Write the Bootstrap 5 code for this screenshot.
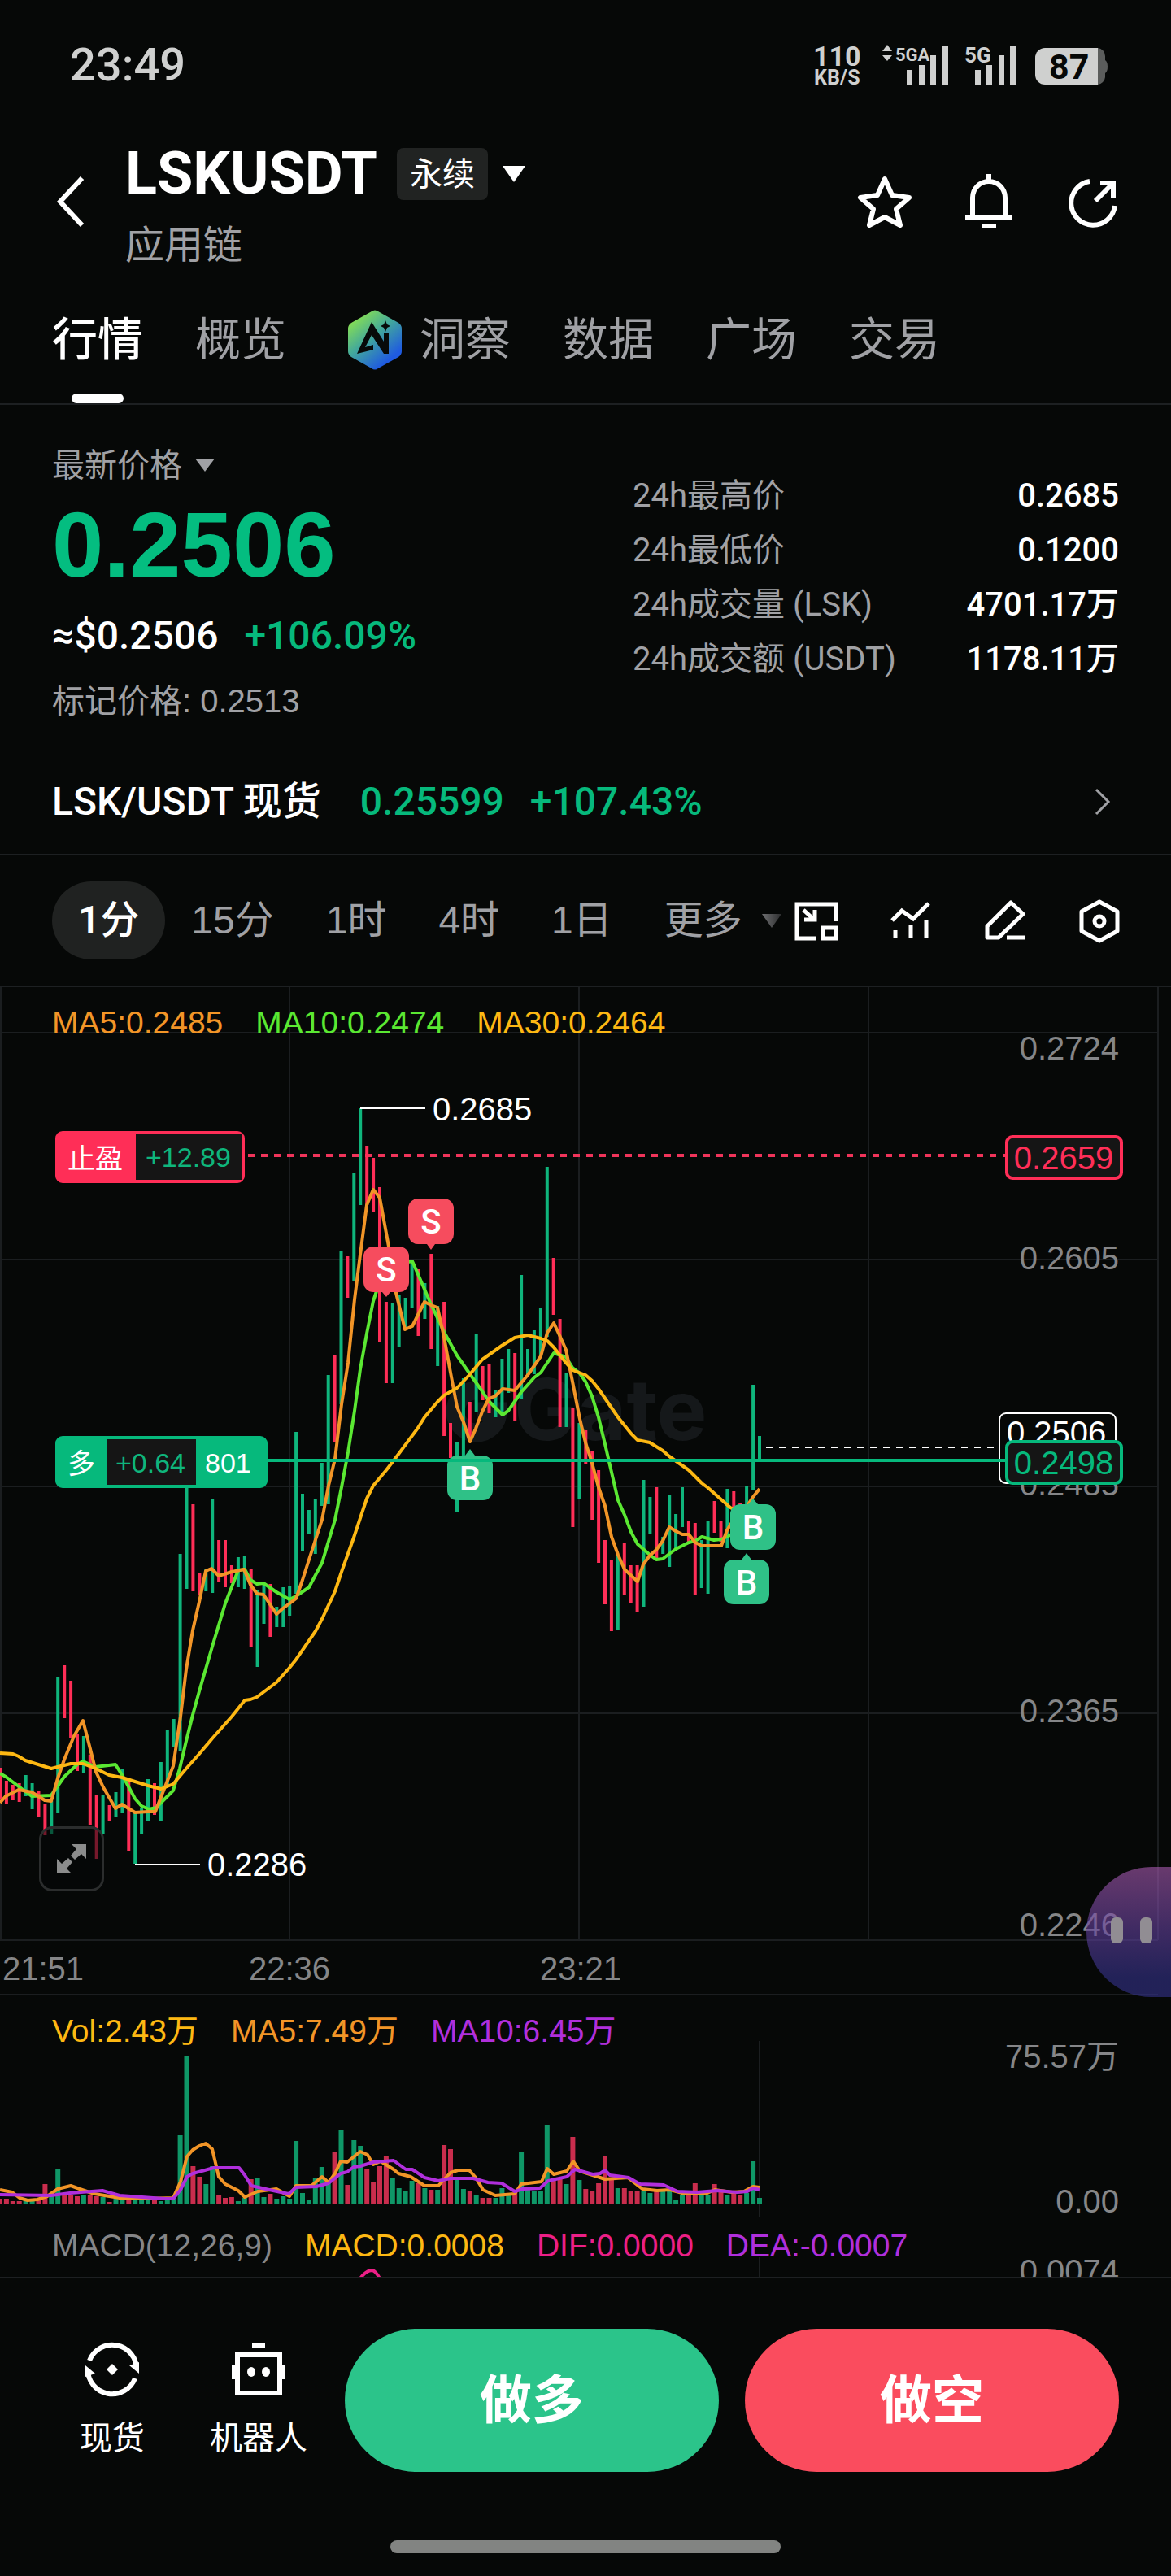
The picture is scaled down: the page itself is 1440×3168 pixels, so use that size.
<!DOCTYPE html>
<html lang="zh-CN" data-bs-theme="dark">
<head>
<meta charset="utf-8">
<meta name="viewport" content="width=device-width, initial-scale=1">
<title>LSKUSDT 永续</title>
<link href="https://cdn.jsdelivr.net/npm/bootstrap@5.3.0/dist/css/bootstrap.min.css" rel="stylesheet">
<style>
:root{--ink:#060807;--line:#1d2022;--muted:#a0a1a5;--axis:#858688;--up:#06b97c;--down:#ff2e57;--ma5:#f29527;--ma10:#5ae832;--ma30:#fdb813;--violet:#b02fdc;--pink:#ec1f86;
--plain:"Liberation Sans","Noto Sans CJK SC",sans-serif;--medium:Roboto,"Noto Sans CJK SC",sans-serif}
body{background:var(--ink);color:#fff;font-family:var(--plain);font-size:40px;line-height:48px;overflow-x:hidden}
svg{display:block;overflow:visible}
button,a{color:inherit;text-decoration:none}
.bare{background:none;border:0;padding:0}
.px-edge{padding-left:64px;padding-right:64px}
.rule-b{border-bottom:2px solid var(--line)}
.rule-t{border-top:2px solid var(--line)}
.txt-muted{color:var(--muted)}
.txt-up{color:var(--up)}
.md{font-family:var(--medium);font-weight:500}
.stroke{fill:none;stroke:currentColor}

.statusbar{height:160px;padding-left:86px;padding-right:78px;color:#cfd0cf}
.clock{font-family:Roboto,sans-serif;font-weight:500;font-size:56px}
.statusbar svg{font-family:Roboto,sans-serif;font-weight:700;fill:currentColor}

.topbar{padding-top:14px}
.back{width:90px;margin-bottom:8px}
.head-icons{gap:64px;margin-bottom:8px}
.pair{font-family:Roboto,sans-serif;font-weight:700;font-size:72px;line-height:80px;margin:0}
.kind{background:#212322;border-radius:8px;line-height:64px;padding:0 16px;margin-left:24px}
.sector{font-size:48px;line-height:56px;margin-top:20px}

.tabs{padding-top:48px;gap:64px}
.tabs a{display:flex;align-items:center;position:relative;font-size:56px;line-height:80px;padding:0 0 38px;color:var(--muted)}
.tabs a.active{color:#fff;font-weight:500}
.tabs a.active::after{content:"";position:absolute;left:50%;bottom:0;width:64px;height:12px;margin-left:-32px;border-radius:6px;background:#fff}
.tabs svg{margin:0 22px 0 12px}

.quote{padding-top:50px}
.last{font-size:114px;line-height:112px;font-weight:700;margin-top:18px;color:#04bd80}
.fiat{font-size:48px;line-height:64px;margin:24px 0;gap:32px}
.stats{width:598px;margin:28px 0 0;line-height:67px}
.stats dt{font-family:var(--medium);font-weight:400}
.stats dd{margin:0}
.spot{font-size:48px;line-height:64px;padding-top:68px;padding-bottom:32px}
.spot b{font-weight:500;margin-right:48px}

.ranges{height:162px}
.ranges .bare{font-size:48px;line-height:96px;padding:0 32px;border-radius:48px;color:var(--muted)}
.ranges .bare.active{background:#202221;color:#fff;font-family:var(--medium);font-weight:500}
.tools{gap:68px}

.panel{position:relative}
.panel svg.plot{width:100%;height:auto;overflow:hidden}
.legend-row{position:absolute;left:64px;top:20px;display:flex;gap:40px;font-size:39px}
.legend-row.low{top:12px}
.plot text{font-family:var(--plain);font-size:40px;dominant-baseline:central}
.plot .sm{font-size:34px}
.plot .mk{font-family:var(--medium);font-weight:500;font-size:42px;fill:#fff;text-anchor:middle}
.plot .ax{fill:var(--axis);text-anchor:end}
.plot .grid{stroke:#1b1e20;stroke-width:2}
.expand{position:absolute;left:48px;bottom:128px;width:80px;height:80px;border:3px solid #2b2d2d;border-radius:16px;background:rgba(6,8,7,.55);color:#8b8c8c;display:flex;align-items:center;justify-content:center;padding:0}
.helper{position:absolute;right:0;bottom:-2px;width:104px;height:160px;border:0;border-radius:80px 0 0 80px;background:linear-gradient(rgba(170,91,178,.6),rgba(99,65,159,.6) 50%,rgba(53,51,142,.6) 85%);padding:0 0 4px 30px;z-index:2}

.shortcut{line-height:56px}
.shortcut svg{margin:0 auto 20px}
.actions{padding-top:62px}
.trade{height:176px;border-radius:88px;border:0;font-size:64px;font-weight:700;color:#fff}
.trade.long{background:#2bc48a;margin-right:32px}
.trade.short{background:#fa4c5e}
.homebar{width:33.333%;height:16px;border-radius:8px;background:#828482;margin:84px auto 28px}
</style>
</head>
<body>
<header>
  <div class="statusbar d-flex align-items-center justify-content-between">
    <span class="clock">23:49</span>
    <svg width="362" height="52" viewBox="998 54 362 52" role="img" aria-label="网络与电量">
      <text x="998" y="81" font-size="34">110</text>
      <text x="999" y="104" font-size="25">KB/S</text>
      <path d="M1083 63l6-8 6 8zM1083 68h12l-6 7z"/>
      <text x="1099" y="75" font-size="22">5GA</text>
      <path d="M1113 86h7v18h-7zM1128 80h7v24h-7zM1142 68h7v36h-7zM1157 56h7v48h-7z"/>
      <text x="1184" y="77" font-size="26">5G</text>
      <path d="M1197 86h7v18h-7zM1211 80h7v24h-7zM1226 68h7v36h-7zM1240 56h7v48h-7z"/>
      <path d="M1340 59h8a10 10 0 0 1 9 10v5q3 2 3 8t-3 8v5a10 10 0 0 1-9 9h-8z" fill="#5b5d5c"/>
      <path d="M1283 59h65v45h-65a12 12 0 0 1-12-12V71a12 12 0 0 1 12-12z"/>
      <text x="1288" y="97" font-size="43" fill="#060807">87</text>
    </svg>
  </div>
  <div class="topbar px-edge d-flex align-items-center">
    <button class="bare back" aria-label="返回"><svg width="44" height="64" viewBox="0 0 44 64"><path class="stroke" stroke-width="6" d="M37 3L10 32l27 29"/></svg></button>
    <div class="flex-grow-1">
      <div class="d-flex align-items-center">
        <h1 class="pair">LSKUSDT</h1>
        <span class="kind">永续</span>
        <svg class="ms-3" width="32" height="22" viewBox="0 0 32 22"><path fill="#fff" d="M2 1h28L16 21z"/></svg>
      </div>
      <div class="sector txt-muted">应用链</div>
    </div>
    <div class="head-icons d-flex">
      <button class="bare" aria-label="收藏"><svg width="64" height="64"><path class="stroke" stroke-width="6" stroke-linejoin="round" d="M32 4L41 24 62 27 46 41 51 61 32 51 13 61 18 41 2 27 23 24Z"/></svg></button>
      <button class="bare" aria-label="提醒"><svg width="64" height="64"><path class="stroke" stroke-width="6" d="M32-2V6M12 51V27a20 20 0 0 1 40 0V51M3 52H61M23 62H41"/></svg></button>
      <button class="bare" aria-label="分享"><svg width="64" height="64"><path class="stroke" stroke-width="6" d="M28 7A27 27 0 1 0 59 37M41 9H57V27M57 9L35 31"/></svg></button>
    </div>
  </div>
  <nav class="tabs px-edge rule-b d-flex">
    <a class="active" href="#">行情</a>
    <a href="#">概览</a>
    <a href="#"><svg width="66" height="74" viewBox="0 0 66 74"><defs><linearGradient id="ai" x1="0" y1="0" x2=".75" y2="1"><stop offset=".1" stop-color="#8fe64a"/><stop offset=".5" stop-color="#42a89c"/><stop offset=".9" stop-color="#1f5be0"/></linearGradient></defs><path fill="url(#ai)" d="M29 2q4-3 8 0L62 16q4 3 4 7V51q0 4-4 7L37 72q-4 3-8 0L4 58q-4-3-4-7V23q0-4 4-7z"/><path fill="#070a09" d="M29 15L44 39V28h6V54H44L29 31 21 46l10-3v6L11 54zM46 13l2 5 4 2-4 2-2 5-2-5-4-2 4-2z"/></svg>洞察</a>
    <a href="#">数据</a>
    <a href="#">广场</a>
    <a href="#">交易</a>
  </nav>
</header>

<main>
  <section class="quote px-edge d-flex justify-content-between align-items-start">
    <div>
      <div class="d-flex align-items-center txt-muted">最新价格<svg class="ms-3" width="24" height="18" viewBox="0 0 24 18"><path fill="currentColor" d="M0 1h24L12 17z"/></svg></div>
      <div class="last">0.2506</div>
      <div class="fiat md d-flex"><span>≈$0.2506</span><span class="txt-up">+106.09%</span></div>
      <div class="txt-muted">标记价格: 0.2513</div>
    </div>
    <dl class="stats">
      <div class="d-flex justify-content-between"><dt class="txt-muted">24h最高价</dt><dd class="md">0.2685</dd></div>
      <div class="d-flex justify-content-between"><dt class="txt-muted">24h最低价</dt><dd class="md">0.1200</dd></div>
      <div class="d-flex justify-content-between"><dt class="txt-muted">24h成交量 (LSK)</dt><dd class="md">4701.17万</dd></div>
      <div class="d-flex justify-content-between"><dt class="txt-muted">24h成交额 (USDT)</dt><dd class="md">1178.11万</dd></div>
    </dl>
  </section>
  <a href="#" class="spot md px-edge rule-b d-flex align-items-center">
    <b>LSK/USDT 现货</b><span class="txt-up">0.25599</span><span class="txt-up ms-4 ps-2">+107.43%</span>
    <svg class="ms-auto me-2 txt-muted" width="24" height="34" viewBox="0 0 24 34"><path class="stroke" stroke-width="3" d="M4 2l15 15L4 32"/></svg>
  </a>
  <div class="ranges px-edge rule-b d-flex align-items-center justify-content-between">
    <div class="d-flex">
      <button class="bare active">1分</button><button class="bare">15分</button><button class="bare">1时</button><button class="bare">4时</button><button class="bare">1日</button>
      <button class="bare d-flex align-items-center pe-0">更多<svg class="ms-4" width="24" height="17" viewBox="0 0 24 17"><defs><linearGradient id="fade" x1="0" x2="1"><stop stop-color="#6e6f71"/><stop offset="1" stop-color="#2c2d2e"/></linearGradient></defs><path fill="url(#fade)" d="M0 0h24L12 17z"/></svg></button>
    </div>
    <div class="tools d-flex">
      <button class="bare p-0" aria-label="画中画"><svg width="48" height="48" color="#fff"><path class="stroke" stroke-width="5" d="M48 25V4H0V46H24M32 33H48V46H32ZM8 11L20 22M22 11V23H9"/></svg></button>
      <button class="bare p-0" aria-label="指标"><svg width="48" height="48" color="#fff"><path class="stroke" stroke-width="5" d="M1 24L13 12 27 22 46 3M5 36V46M24 30V46M43 24V46"/></svg></button>
      <button class="bare p-0" aria-label="画线"><svg width="48" height="48" color="#fff"><path class="stroke" stroke-width="5" stroke-linejoin="round" d="M2 45V31L31 2 46 16 16 45ZM26 45H48"/></svg></button>
      <button class="bare p-0" aria-label="设置"><svg width="48" height="48" color="#fff"><path class="stroke" stroke-width="5" stroke-linejoin="round" d="M24 1L46 13V37L24 49 2 37V13Z"/><circle class="stroke" stroke-width="5" cx="24" cy="25" r="6"/></svg></button>
    </div>
  </div>

  <section class="panel">
    <svg class="plot" viewBox="0 1214 1440 1240" role="img" aria-label="K线图">
      <path class="grid" d="M0 1270H1424M0 1549H1424M0 1828H1424M0 2107H1424M0 2386H1424M0 2453H1424M1 1214V2386M356 1214V2386M712 1214V2386M1068 1214V2386M1424 1214V2386"/>
      <g fill="#15181a"><text x="632" y="1733" style="font:700 104px Inter,sans-serif">Gate</text><path fill="none" stroke="#15181a" stroke-width="23" d="M586 1710a26 26 0 1 0 26 26H586"/></g>
      <g class="ax"><text class="ax" x="1376" y="1289">0.2724</text><text class="ax" x="1376" y="1547">0.2605</text><text class="ax" x="1376" y="1825">0.2485</text><text class="ax" x="1376" y="2104">0.2365</text><text class="ax" x="1376" y="2367">0.2246</text></g>
      <g fill="#858688"><text x="3" y="2421">21:51</text><text x="356" y="2421" text-anchor="middle">22:36</text><text x="714" y="2421" text-anchor="middle">23:21</text></g>
      <path stroke="#f0345a" stroke-width="4" stroke-dasharray="8 8" d="M305 1421H1236"/>
      <g id="candles" stroke-width="4"></g>
      <g fill="none" stroke-width="4" stroke-linejoin="round">
        <polyline stroke="var(--ma10)" points="0,2181 7,2185 23,2197 39,2209 63,2208 79,2185 95,2170 102,2166 117,2173 142,2170 152,2186 166,2212 174,2221 183,2225 192,2223 205,2210 213,2202 221,2175 229,2141 237,2109 245,2080 261,2025 277,1972 293,1931 301,1930 308,1943 316,1948 324,1947 340,1958 356,1967 364,1963 380,1952 396,1922 412,1869 420,1829 428,1786 436,1735 443,1684 451,1640 459,1600 463,1588 480,1556 507,1551 514,1567 530,1604 546,1638 562,1667 578,1690 593,1711 601,1723 618,1740 625,1735 641,1712 657,1694 665,1688 681,1664 696,1669 704,1682 713,1689 720,1699 728,1717 736,1743 744,1776 760,1845 768,1863 776,1884 784,1899 799,1912 807,1918 815,1917 831,1905 847,1897 855,1895 863,1890 878,1894 887,1893 898,1888 910,1880"/>
        <polyline stroke="var(--ma5)" points="0,2217 7,2209 23,2201 39,2204 55,2214 63,2215 71,2187 79,2164 91,2135 102,2116 111,2151 118,2179 127,2198 142,2224 150,2219 166,2229 182,2228 191,2228 198,2210 213,2172 222,2111 229,2053 237,2005 245,1970 253,1932 260,1929 269,1938 285,1933 300,1930 308,1949 316,1960 324,1961 340,1985 348,1978 364,1966 372,1943 380,1918 396,1869 404,1827 412,1794 420,1727 428,1676 436,1598 443,1543 451,1482 459,1463 467,1473 478,1533 487,1590 498,1635 507,1631 522,1601 530,1605 538,1608 546,1644 554,1688 562,1730 570,1749 578,1773 585,1757 593,1736 601,1720 609,1717 618,1708 633,1710 649,1691 665,1668 673,1639 681,1627 688,1642 696,1660 704,1699 713,1745 720,1774 728,1799 736,1829 744,1852 752,1890 760,1912 768,1930 784,1945 791,1924 799,1913 807,1906 815,1895 823,1878 831,1883 839,1887 847,1887 855,1897 863,1901 887,1901 894,1882 902,1869 918,1853 926,1841 934,1831"/>
        <polyline stroke="var(--ma30)" points="0,2156 16,2157 23,2160 31,2165 63,2175 79,2171 87,2169 102,2169 118,2175 134,2183 150,2186 182,2196 198,2200 213,2194 229,2175 245,2157 261,2138 285,2111 301,2091 308,2090 316,2087 340,2069 356,2051 364,2041 388,2006 396,1991 412,1957 420,1933 435,1891 451,1843 459,1827 475,1808 491,1787 514,1756 522,1743 538,1724 546,1716 562,1707 578,1690 593,1672 617,1655 633,1645 649,1642 665,1646 673,1649 681,1657 696,1676 704,1685 720,1691 728,1698 736,1708 760,1743 776,1763 784,1771 799,1774 815,1784 823,1791 847,1808 863,1824 871,1830 898,1854 920,1865"/>
      </g>
      <path stroke="#fff" stroke-width="2" d="M443 1363H523M166 2293H246"/>
      <g fill="#fff"><text x="532" y="1364">0.2685</text><text x="255" y="2293">0.2286</text></g>
      <g>
        <path fill="#f64c5e" d="M459 1533h32a12 12 0 0 1 12 12v32a12 12 0 0 1-12 12h-11l-5 6-5-6h-11a12 12 0 0 1-12-12v-32a12 12 0 0 1 12-12z"/><text class="mk" x="475" y="1561">S</text>
        <path fill="#f64c5e" d="M514 1474h32a12 12 0 0 1 12 12v32a12 12 0 0 1-12 12h-11l-5 7-5-7h-11a12 12 0 0 1-12-12v-32a12 12 0 0 1 12-12z"/><text class="mk" x="530" y="1502">S</text>
        <path fill="#2fc187" d="M562 1790h10l6-8 6 8h10a12 12 0 0 1 12 12v31a12 12 0 0 1-12 12h-32a12 12 0 0 1-12-12v-31a12 12 0 0 1 12-12z"/><text class="mk" x="578" y="1818">B</text>
        <path fill="#2fc187" d="M902 1918h10l6-8 6 8h10a12 12 0 0 1 12 12v31a12 12 0 0 1-12 12h-32a12 12 0 0 1-12-12v-31a12 12 0 0 1 12-12z"/><text class="mk" x="918" y="1946">B</text>
        <path fill="#2fc187" d="M910 1850h10l6-7 6 7h10a12 12 0 0 1 12 12v32a12 12 0 0 1-12 12h-32a12 12 0 0 1-12-12v-32a12 12 0 0 1 12-12z"/><text class="mk" x="926" y="1878">B</text>
      </g>
      <path stroke="#fff" stroke-width="2" stroke-dasharray="8 8" d="M942 1780H1228"/>
      <rect x="1229" y="1738" width="143" height="86" rx="8" fill="#060807" stroke="#fff" stroke-width="2"/><text x="1238" y="1762" fill="#fff">0.2506</text>
      <path stroke="#06b97c" stroke-width="4" d="M329 1796H1236"/>
      <rect x="1238" y="1773" width="141" height="51" rx="7" fill="#151515" stroke="#06b97c" stroke-width="4"/><text x="1308" y="1799" fill="#06b97c" text-anchor="middle">0.2498</text>
      <rect x="1238" y="1398" width="141" height="51" rx="7" fill="#151515" stroke="#ff2e57" stroke-width="4"/><text x="1308" y="1424" fill="#ff2e57" text-anchor="middle">0.2659</text>
      <rect x="68" y="1391" width="233" height="64" rx="9" fill="#ff2e57"/><path fill="#151515" d="M167 1395H297V1451H167z"/>
      <text class="sm" x="83" y="1425" fill="#fff">止盈</text><text class="sm" x="179" y="1423" fill="#0fb57c">+12.89</text>
      <rect x="68" y="1766" width="261" height="64" rx="9" fill="#06b97c"/><path fill="#151515" d="M131 1770H241V1826H131z"/>
      <text class="sm" x="83" y="1800" fill="#fff">多</text><text class="sm" x="142" y="1799" fill="#0fb57c">+0.64</text><text class="sm md" x="252" y="1799" fill="#fff">801</text>
    </svg>
    <div class="legend-row"><span style="color:var(--ma5)">MA5:0.2485</span><span style="color:var(--ma10)">MA10:0.2474</span><span style="color:var(--ma30)">MA30:0.2464</span></div>
    <button class="expand" aria-label="全屏"><svg width="36" height="36"><path fill="currentColor" d="M18 0H36V18L30 12 22 19 17 14 24 6zM18 36H0V18L6 24 14 17 19 22 12 30z"/></svg></button>
    <button class="helper" aria-label="助手"><svg width="52" height="34"><rect y="1" width="15" height="32" rx="6" fill="#918d93"/><rect x="36" y="1" width="15" height="32" rx="6" fill="#918d93"/></svg></button>
  </section>

  <section class="panel">
    <svg class="plot" viewBox="0 2454 1440 272" role="img" aria-label="成交量">
      <path class="grid" d="M934 2510V2726"/>
      <g id="volumes"></g>
      <g fill="none" stroke-width="4" stroke-linejoin="round">
        <polyline stroke="var(--ma5)" points="0,2693 15,2696 24,2703 34,2706 46,2705 58,2701 71,2692 87,2688 98,2692 116,2698 147,2703 178,2704 213,2703 222,2683 230,2652 237,2644 245,2639 253,2636 261,2643 269,2677 277,2686 293,2694 301,2702 317,2695 340,2692 356,2701 364,2688 383,2688 396,2677 404,2684 412,2673 419,2658 427,2659 443,2646 452,2650 459,2662 468,2658 484,2668 490,2673 505,2677 522,2688 539,2688 554,2672 563,2669 577,2669 585,2678 594,2693 609,2700 633,2698 641,2686 666,2683 673,2667 681,2674 697,2670 705,2658 713,2670 735,2677 744,2680 772,2678 790,2692 808,2694 824,2693 839,2697 870,2697 879,2693 900,2696 915,2695 926,2689 934,2690"/>
        <polyline stroke="var(--violet)" points="0,2699 63,2700 86,2697 126,2694 147,2700 202,2704 213,2704 222,2693 230,2677 237,2673 263,2666 294,2666 301,2675 309,2688 331,2693 355,2698 364,2690 389,2689 404,2685 419,2673 427,2671 435,2665 443,2664 459,2659 484,2657 499,2668 507,2668 522,2678 539,2682 554,2679 582,2679 600,2684 617,2685 633,2695 643,2692 664,2691 674,2682 697,2677 707,2668 729,2674 738,2673 744,2669 750,2675 773,2678 787,2686 816,2687 833,2695 857,2696 882,2694 906,2696 919,2695 926,2691 934,2693"/>
      </g>
      <text class="ax" x="1376" y="2529">75.57万</text><text class="ax" x="1376" y="2707">0.00</text>
    </svg>
    <div class="legend-row"><span style="color:var(--ma30)">Vol:2.43万</span><span style="color:var(--ma5)">MA5:7.49万</span><span style="color:var(--violet)">MA10:6.45万</span></div>
  </section>

  <section class="panel">
    <svg class="plot" viewBox="0 2726 1440 74" role="img" aria-label="MACD">
      <path class="grid" d="M934 2776V2800"/>
      <path fill="none" stroke="var(--pink)" stroke-width="4" d="M443 2802Q450 2792 458 2792 462 2793 467 2802"/>
      <text class="ax" x="1376" y="2793">0.0074</text>
    </svg>
    <div class="legend-row low"><span style="color:var(--axis)">MACD(12,26,9)</span><span style="color:var(--ma30)">MACD:0.0008</span><span style="color:var(--pink)">DIF:0.0000</span><span style="color:var(--violet)">DEA:-0.0007</span></div>
  </section>
</main>

<footer class="rule-t">
  <div class="actions px-edge d-flex align-items-center">
    <a href="#" class="shortcut text-center" style="width:148px">
      <svg width="72" height="72"><path class="stroke" stroke-width="6" d="M8 25A30 30 0 0 1 66 36"/><path fill="#fff" d="M57 31L69 41V27z"/><g transform="rotate(180 36 36)"><path class="stroke" stroke-width="6" d="M8 25A30 30 0 0 1 66 36"/><path fill="#fff" d="M57 31L69 41V27z"/></g><path fill="#fff" d="M36 29l7 7-7 7-7-7z"/></svg>现货
    </a>
    <a href="#" class="shortcut text-center" style="margin:0 46px">
      <svg width="72" height="72"><path class="stroke" stroke-width="6" d="M10 18H62V65H10ZM28 7H44"/><path fill="#fff" d="M3 31H7V48H3zM65 31H69V48H65z"/><ellipse cx="27" cy="39" rx="5" ry="6" fill="#fff"/><ellipse cx="45" cy="39" rx="5" ry="6" fill="#fff"/></svg>机器人
    </a>
    <button class="trade long flex-fill">做多</button>
    <button class="trade short flex-fill">做空</button>
  </div>
  <div class="homebar"></div>
</footer>

<script src="https://cdn.jsdelivr.net/npm/bootstrap@5.3.0/dist/js/bootstrap.bundle.min.js"></script>
<script>
// One entry per minute: direction, top and bottom of the candle, top of the volume bar.
const bars = `r2174,2212,2704 r2190,2218,2704 r2195,2214,2707 r2193,2216,2707 g2183,2209,2706 g2193,2225,2706 r2202,2234,2705 r2218,2257,2686 g2215,2255,2698 g2062,2230,2668
r2048,2113,2699 r2067,2137,2699 r2132,2178,2701 g2135,2181,2699 r2158,2244,2699 r2207,2286,2701 g2207,2255,2702 r2220,2239,2708 g2204,2234,2704 g2176,2230,2706
r2189,2276,2706 g2229,2292,2706 g2223,2255,2706 g2188,2239,2704 r2193,2232,2706 g2167,2239,2707 g2127,2195,2705 g2114,2148,2702 g1911,2153,2626 g1800,1954,2528
r1850,1957,2664 r1934,1962,2677 g1930,1957,2686 g1843,1959,2664 r1894,1946,2700 r1894,1952,2703 r1925,1947,2702 g1915,1952,2707 g1913,1954,2703 r1929,2025,2680
g1956,2050,2679 g1947,1997,2702 r1948,2013,2698 g1976,2001,2704 g1952,2001,2701 g1950,1987,2704 g1761,1960,2633 g1837,1908,2697 g1857,1887,2706 g1843,1911,2678
g1799,1852,2665 g1691,1850,2685 r1666,1773,2647 g1538,1727,2620 r1545,1596,2687 g1442,1575,2632 g1363,1482,2639 r1409,1482,2668 r1424,1491,2684 r1460,1650,2664
r1601,1701,2651 g1603,1701,2678 g1592,1657,2691 g1596,1632,2695 g1552,1608,2682 r1561,1643,2685 g1578,1622,2691 r1542,1659,2693 g1606,1680,2693 r1601,1766,2638
r1750,1793,2643 g1773,1860,2680 g1695,1790,2692 r1724,1773,2695 g1640,1736,2699 r1680,1722,2703 r1677,1738,2703 g1710,1743,2703 g1671,1738,2691 g1659,1713,2698
r1664,1747,2697 g1568,1720,2646 g1659,1694,2689 g1636,1690,2694 g1608,1667,2694 g1435,1644,2613 r1547,1617,2682 r1622,1755,2680 g1689,1755,2686 r1731,1878,2628
g1750,1843,2681 r1759,1801,2692 r1785,1869,2694 r1808,1922,2685 r1894,1973,2652 r1918,2006,2678 g1912,2004,2691 r1897,1962,2691 r1925,1971,2695 r1925,1983,2695
g1820,1976,2694 g1841,1887,2697 r1829,1916,2693 g1890,1911,2694 g1838,1927,2695 g1862,1908,2705 g1829,1878,2699 r1871,1897,2697 r1873,1962,2685 g1894,1953,2700
g1871,1960,2700 r1846,1885,2686 r1871,1896,2693 g1831,1904,2699 r1834,1865,2697 r1848,1870,2699 g1827,1870,2697 g1703,1833,2658 g1766,1796,2703`.split(/\s+/);
let candles = '', volumes = '';
bars.forEach((bar, i) => {
  const x = i * 7.915, up = bar[0] === 'g';
  const [top, bottom, vol] = bar.slice(1).split(',').map(Number);
  candles += `<path stroke="${up ? '#0fb57c' : '#ff2e57'}" d="M${x.toFixed(1)} ${top}V${bottom}"/>`;
  volumes += `<rect x="${(x - 3).toFixed(1)}" y="${vol}" width="6" height="${2710 - vol}" fill="${up ? '#0f9767' : '#c92d4d'}"/>`;
});
document.getElementById('candles').innerHTML = candles;
document.getElementById('volumes').innerHTML = volumes;
</script>
</body>
</html>
